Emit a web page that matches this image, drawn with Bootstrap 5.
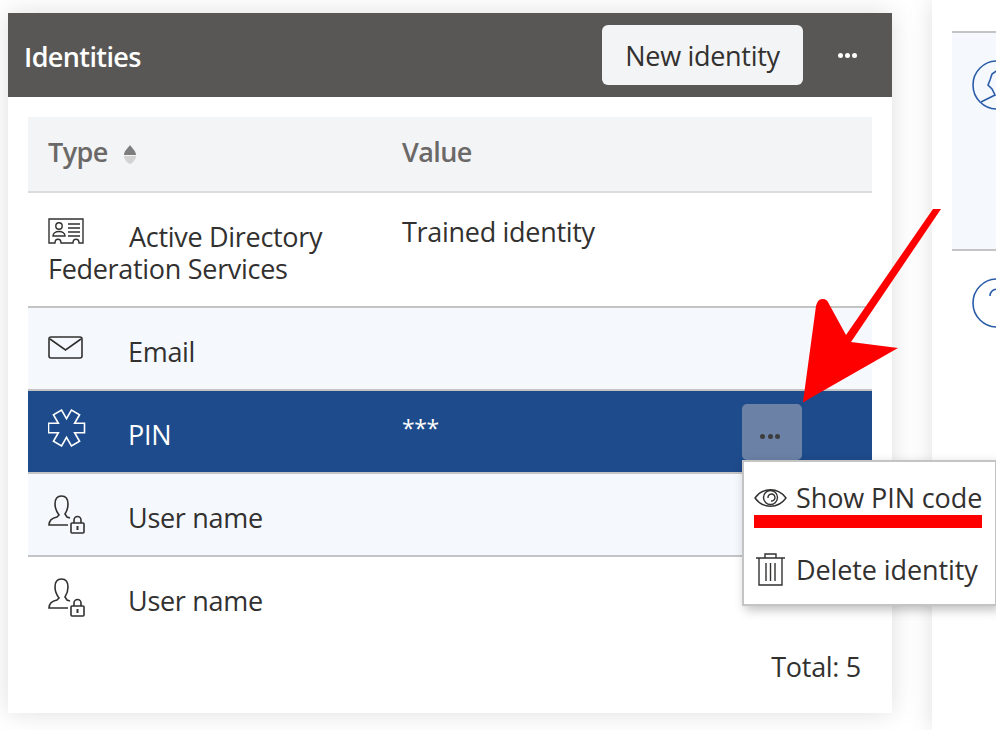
<!DOCTYPE html>
<html lang="en"><head><meta charset="utf-8"><title>Identities</title>
<link href="https://cdn.jsdelivr.net/npm/bootstrap@5.3.0/dist/css/bootstrap.min.css" rel="stylesheet">
<style>
html,body{height:730px;overflow:hidden;background:#fff}
body{font-family:"Open Sans","Noto Sans",sans-serif;font-size:27px;color:#323130;position:relative;letter-spacing:-.3px}
.stage{display:flex;align-items:flex-start;padding:13px 0 0 8px;gap:40px;width:996px;overflow:hidden;height:730px}
.idcard{width:884px;height:700px;flex:none;background:#fff;box-shadow:0 0 24px rgba(0,0,0,.13);position:relative;border:0;border-radius:0}
.idhead{height:84px;background:#595755;padding:12px 0 12px 16px}
.idtitle{color:#fff;font-size:27px;font-weight:600;letter-spacing:-.6px;margin:0;padding-top:4px}
.newbtn{background:#f3f4f6;border:0;color:#323130;font-size:27px;height:60px;width:201px;border-radius:6px;padding:3px 0 0;letter-spacing:-.3px;margin-left:1px}
.newbtn:hover{background:#f3f4f6;color:#323130}
.dotsbtn{width:89px;display:flex;justify-content:center;gap:2px}
.dotw{width:5px;height:5px;border-radius:50%;background:#fff}
.tablewrap{padding:20px 20px 0}
.idtable{margin:0;table-layout:fixed;width:844px;--bs-table-bg:transparent;color:#323130}
.idtable th{background:#f3f4f6;color:#6b6967;font-weight:600;height:75px;padding:0 20px 4px;border-bottom:2px solid #dcdcdc;vertical-align:middle;font-size:27px;letter-spacing:-.6px}
.idtable td{padding:0 20px;border-bottom:2px solid #c4c4c4;vertical-align:top;line-height:32px;color:#323130}
.idtable tr:last-child td{border-bottom:0}
.rowh{height:83px}
.rowt{height:115px}
.rowb{background:#f5f9fe}
.rowsel td{background:#1e4b8b;color:#fff;border-bottom-color:#c4c4c4}
.celltxt{display:flex;align-items:flex-start;padding-top:28px}
.ic{width:80px;flex:none;display:block}
.icmail{margin-top:0}
.icpin{margin-top:-10px}
.icuser{margin-top:-11px}
.adline{padding-top:28px}
.icad{margin:-3px 44px 0 0;vertical-align:top}
.valtrained{padding-top:23px}
.valpin{padding-top:21px;font-size:23px;letter-spacing:-.4px}
.sorter{filter:blur(.5px);margin:5px 0 0 -1px}
.totalline{text-align:right;padding:0 11px 0 0;margin-top:12px;line-height:32px}
.sel-dots{position:absolute;left:734px;top:391px;width:60px;height:56px;background:#6b82a6;border-radius:5px;display:flex;align-items:center;justify-content:center;gap:2.5px;padding:8px 4px 0 0}
.sel-dots i{width:5px;height:5px;border-radius:50%;background:#3c3c3c;display:block}
.ctxmenu{position:absolute;left:734px;top:447px;width:255px;height:146px;background:#fff;border:2px solid #c4c4c4;box-shadow:3px 4px 10px rgba(0,0,0,.25);border-radius:0;margin:0;padding:0;z-index:2;display:block;font-size:27px;color:#323130;letter-spacing:-.1px}
.ctxitem{display:flex;align-items:center;gap:9px;padding:0 0 0 10px;height:72px;color:#323130;white-space:nowrap}
.side{flex:1;height:730px;background:#fff;box-shadow:0 0 24px rgba(0,0,0,.13);padding:31px 0 0 20px;overflow:hidden;margin-top:-13px}
.sidea{height:220px;background:#f5f9fe;border-top:2px solid #c4c4c4;border-bottom:2px solid #c4c4c4;padding:27px 0 0 20px}
.sideb{padding:27px 0 0 20px}
.overlay{position:absolute;left:0;top:0;width:996px;height:730px;z-index:5;pointer-events:none}
</style></head><body>
<div class="stage">
<section class="card idcard">
  <div class="idhead d-flex align-items-center">
    <h1 class="idtitle flex-grow-1">Identities</h1>
    <button class="btn newbtn" type="button">New identity</button>
    <div class="dotsbtn"><span class="dotw"></span><span class="dotw"></span><span class="dotw"></span></div>
  </div>
  <div class="tablewrap">
  <table class="table idtable">
   <colgroup><col style="width:354px"><col></colgroup>
   <thead><tr><th><span class="d-inline-flex align-items-center gap-3">Type <svg class="sorter" width="14" height="22" viewBox="0 0 14 22"><path d="M7 1C9 4 13 7 13 11H1C1 7 5 4 7 1Z" fill="#7d7d7d"/><path d="M7 20C10 19 13 15 13 12H1C1 15 4 19 7 20Z" fill="#d2d2d2"/></svg></span></th><th>Value</th></tr></thead>
   <tbody>
    <tr class="rowt"><td><div class="adline"><svg class="icad" width="37" height="26" viewBox="0 0 37 26" fill="none" stroke="#323130" stroke-width="1.4"><path d="M1 1H35V25H31C31 20 25 20 25 25H13C13 20 7 20 7 25H1Z"/><circle cx="11" cy="8" r="3.200"/><path d="M5 18c0-6 12-6 12 0ZM20 6H32M20 10H32M20 14H32M20 18H32"/></svg>Active Directory Federation Services</div></td><td><div class="valtrained">Trained identity</div></td></tr>
    <tr class="rowh rowb"><td colspan="2"><div class="celltxt"><svg class="ic icmail" height="24" viewBox="0 0 80 24" fill="none" stroke="#323130" stroke-width="1.6"><rect x="1" y="1" width="33" height="21" rx="2"/><path d="M2 3 17.500 14 33 3"/></svg>Email</div></td></tr>
    <tr class="rowh rowsel"><td><div class="celltxt"><svg class="ic icpin" height="38" viewBox="0 0 80 38" fill="none" stroke="#fff" stroke-width="1.6"><path transform="translate(18.500 19)" d="M18-4.700V4.700H8.140L13.070 13.240 4.930 17.940 0 9.400-4.930 17.940-13.070 13.240-8.140 4.700H-18V-4.700H-8.140L-13.070-13.240-4.930-17.940 0-9.400 4.930-17.940 13.070-13.240 8.140-4.700Z"/></svg>PIN</div></td><td><div class="valpin">***</div></td></tr>
    <tr class="rowh rowb"><td colspan="2"><div class="celltxt"><svg class="ic icuser" height="44" viewBox="0 0 80 44" fill="none" stroke="#323130" stroke-width="1.6"><path d="M20 34H1C1 29 4 27 9 26L11 24C8 20 7 18 7 13 7 7 10 5 13.500 5S20 7 20 13C20 18 19 20 17 23L19 26 22 27"/><rect x="23" y="32" width="13" height="10" rx="1"/><path d="M26 32V29A3.500 3.500 0 0 1 33 29V32"/><path d="M29.500 35V39" stroke-width="2"/></svg>User name</div></td></tr>
    <tr class="rowh"><td colspan="2"><div class="celltxt"><svg class="ic icuser" height="44" viewBox="0 0 80 44" fill="none" stroke="#323130" stroke-width="1.6"><path d="M20 34H1C1 29 4 27 9 26L11 24C8 20 7 18 7 13 7 7 10 5 13.500 5S20 7 20 13C20 18 19 20 17 23L19 26 22 27"/><rect x="23" y="32" width="13" height="10" rx="1"/><path d="M26 32V29A3.500 3.500 0 0 1 33 29V32"/><path d="M29.500 35V39" stroke-width="2"/></svg>User name</div></td></tr>
   </tbody>
  </table>
  <div class="totalline">Total: 5</div>
  </div>
  <div class="sel-dots"><i></i><i></i><i></i></div>
  <ul class="dropdown-menu ctxmenu">
    <li class="ctxitem"><svg width="33" height="22" viewBox="0 0 33 22" fill="none" stroke="#323130" stroke-width="1.4"><path d="M1 11C9 0 24 0 32 11 24 22 9 22 1 11Z"/><circle cx="16.500" cy="10.500" r="7"/><path d="M14 11A3.500 3.500 0 1 1 17 14"/></svg>Show PIN code</li>
    <li class="ctxitem"><svg width="33" height="34" viewBox="0 0 33 34" fill="none" stroke="#323130" stroke-width="1.4"><path d="M2 5H31M11 5V1H22V5M5 5V32H28V5M12 10V28M16.500 10V28M21 10V28"/></svg>Delete identity</li>
  </ul>
</section>
<aside class="side">
  <div class="sidea"><svg width="50" height="50" viewBox="0 0 50 50" fill="none" stroke="#2a5ca8" stroke-width="1.6"><circle cx="25" cy="25" r="24"/><path d="M9 42 23 35 20 29 16 25 18 20 20 14 26 10"/></svg></div>
  <div class="sideb"><svg width="50" height="50" viewBox="0 0 50 50" fill="none" stroke="#2a5ca8" stroke-width="1.6"><circle cx="25" cy="25" r="24"/><path d="M18 18C18 9 32 9 32 18 32 23 25 24 25 30"/></svg></div>
</aside>
</div>
<svg class="overlay" viewBox="0 0 996 730" aria-hidden="true"><path d="M933 209H941L851 342 898 348 807 400Q803 403 803 402L816 306Q818 298 823 299 827 299 829 304L846 335Z" fill="#f00"/><rect x="754" y="515" width="228" height="13" fill="#f00"/></svg>
</body></html>
